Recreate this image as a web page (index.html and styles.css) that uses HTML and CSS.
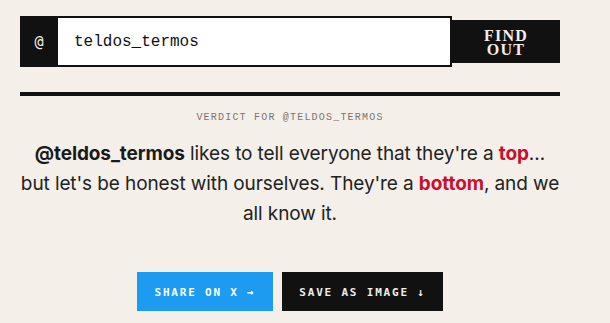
FILE: index.html
```html
<!DOCTYPE html>
<html>
<head>
  <title>Top or Bottom</title>
  <link rel="stylesheet" href="styles.css">
</head>
<body>
  <div class="wrap">
    <form class="search">
      <span class="at">@</span>
      <input class="handle" type="text" value="teldos_termos">
      <button class="find" type="button">FIND<br>OUT</button>
    </form>

    <div class="rule"></div>

    <p class="label">VERDICT FOR @TELDOS_TERMOS</p>
    <p class="verdict">
      <b>@teldos_termos</b> likes to tell everyone that they're a <b class="red">top</b>&hellip;
      but let's be honest with ourselves. They're a <b class="red">bottom</b>, and we all know it.
    </p>

    <div class="actions">
      <button class="btn share" type="button">SHARE ON X &rarr;</button>
      <button class="btn save" type="button">SAVE AS IMAGE &darr;</button>
    </div>
  </div>
</body>
</html>
```

FILE: styles.css
```css
body {
  margin: 0;
  background: #f4efe8;
  color: #222;
  font-family: Inter, "Noto Sans", sans-serif;
}
.wrap {
  width: 540px;
  margin-left: 20px;
  padding-top: 16px;
}
.search {
  display: flex;
  align-items: center;
  margin: 0;
}
.at {
  width: 38px;
  height: 51px;
  background: #111;
  color: #f4efe8;
  font-family: "DejaVu Sans Mono", monospace;
  font-size: 15px;
  display: flex;
  align-items: center;
  justify-content: center;
}
.handle {
  box-sizing: border-box;
  width: 394px;
  height: 51px;
  margin: 0;
  border: 2px solid #111;
  border-left: none;
  padding: 0 16px;
  background: #fff;
  color: #111;
  font-family: "Liberation Mono", monospace;
  font-size: 16px;
  outline: none;
}
.find {
  width: 108px;
  height: 43px;
  border: none;
  background: #111;
  color: #f4efe8;
  font-family: "Liberation Serif", serif;
  font-weight: bold;
  font-size: 16px;
  line-height: 14px;
  letter-spacing: 1.2px;
  padding: 2px 0 0;
}
.rule {
  height: 4px;
  background: #111;
  margin-top: 25px;
}
.label {
  margin: 16px 0 0;
  text-align: center;
  font-family: "Liberation Mono", monospace;
  font-size: 10px;
  letter-spacing: 1.2px;
  color: #7a7570;
}
.verdict {
  margin: 16px 0 0;
  text-align: center;
  font-size: 19px;
  line-height: 30px;
  letter-spacing: -0.1px;
}
.verdict b {
  font-weight: 700;
  color: #1a1a1a;
}
.verdict .red {
  color: #c8102e;
}
.actions {
  display: flex;
  justify-content: center;
  gap: 9px;
  margin-top: 43px;
}
.btn {
  height: 39px;
  padding: 2px 0 0;
  border: none;
  font-family: "DejaVu Sans Mono", monospace;
  font-weight: bold;
  font-size: 11px;
  letter-spacing: 1.8px;
  color: #fff;
}
.share {
  width: 136px;
  background: #1d9bf0;
}
.save {
  width: 161px;
  background: #111;
  color: #eee;
}
```
